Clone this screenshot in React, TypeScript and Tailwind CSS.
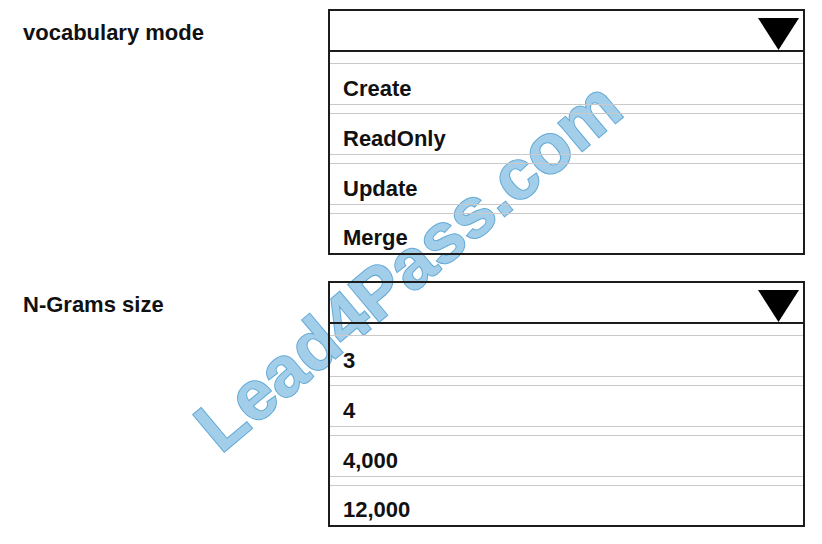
import React from "react"

const font = { fontFamily: '"Liberation Sans", Arial, sans-serif' }

function Arrow() {
  return (
    <svg width="41" height="32" viewBox="0 0 41 32" className="block">
      <polygon points="0,0 41,0 20.5,32" fill="#000" />
    </svg>
  )
}

function Dropdown({ options }: { options: string[] }) {
  return (
    <div className="w-[477px] border-2 border-[#1c1c1c]">
      <div className="h-[41px] flex items-end justify-end pr-[4px] border-b-2 border-[#1c1c1c]">
        <Arrow />
      </div>
      <div className="pt-[11px] flex flex-col gap-[8px]">
        {options.map((o, i) => {
          const last = i === options.length - 1
          return (
            <div
              key={o}
              className={
                last
                  ? "h-[40px] border-t border-[#c9c9c9] pl-[13px] pt-[13px] text-[22px] leading-[22px] font-bold text-[#111]"
                  : "h-[42px] border-y border-[#c9c9c9] pl-[13px] pt-[14px] text-[22px] leading-[22px] font-bold text-[#111]"
              }
            >
              {o}
            </div>
          )
        })}
      </div>
    </div>
  )
}

function Row({ label, options }: { label: string; options: string[] }) {
  return (
    <div className="flex items-start">
      <div className="w-[305px] pt-[13px] text-[22px] leading-[22px] font-bold text-[#111]">{label}</div>
      <Dropdown options={options} />
    </div>
  )
}

export default function App() {
  return (
    <div className="relative w-[822px] h-[544px] bg-white overflow-hidden" style={font}>
      {/* watermark sits under the dropdowns */}
      <span className="absolute left-[408px] top-[266px] -translate-x-1/2 -translate-y-1/2 -rotate-[40deg] whitespace-nowrap text-[70px] leading-none font-bold text-[#a2cee9] [-webkit-text-stroke:2px_#62a9d6] [paint-order:stroke_fill] pointer-events-none">
        Lead4Pass.com
      </span>
      <div className="relative pt-[9px] pl-[23px] flex flex-col gap-[26px]">
        <Row label="vocabulary mode" options={["Create", "ReadOnly", "Update", "Merge"]} />
        <Row label="N-Grams size" options={["3", "4", "4,000", "12,000"]} />
      </div>
    </div>
  )
}
